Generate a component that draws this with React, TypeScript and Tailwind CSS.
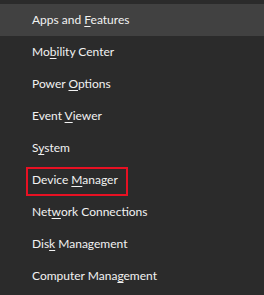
import React from 'react';

type Item = { pre: string; key: string; post: string; active?: boolean; marked?: boolean };

const items: Item[] = [
  { pre: 'Apps and ', key: 'F', post: 'eatures', active: true },
  { pre: 'Mo', key: 'b', post: 'ility Center' },
  { pre: 'Power ', key: 'O', post: 'ptions' },
  { pre: 'Event ', key: 'V', post: 'iewer' },
  { pre: 'S', key: 'y', post: 'stem' },
  { pre: 'Device ', key: 'M', post: 'anager', marked: true },
  { pre: 'Net', key: 'w', post: 'ork Connections' },
  { pre: 'Dis', key: 'k', post: ' Management' },
  { pre: 'Computer Mana', key: 'g', post: 'ement' },
];

const App: React.FC = () => {
  return (
    <div
      className="w-[264px] h-[295px] bg-[#2b2b2b] pt-1 overflow-hidden text-[12px] text-[#f2f2f2]"
      style={{ fontFamily: 'Lato, "Noto Sans", sans-serif' }}
    >
      {items.map((it, i) => (
        <div
          key={i}
          className={`relative h-8 flex items-center pl-8 ${it.active ? 'bg-[#414141]' : ''}`}
        >
          <span>
            {it.pre}
            <span className="underline underline-offset-2">{it.key}</span>
            {it.post}
          </span>
          {it.marked && (
            <div className="absolute left-[26px] top-[3px] w-[102px] h-[29px] border-2 border-[#e81123]" />
          )}
        </div>
      ))}
    </div>
  );
};

export default App;
